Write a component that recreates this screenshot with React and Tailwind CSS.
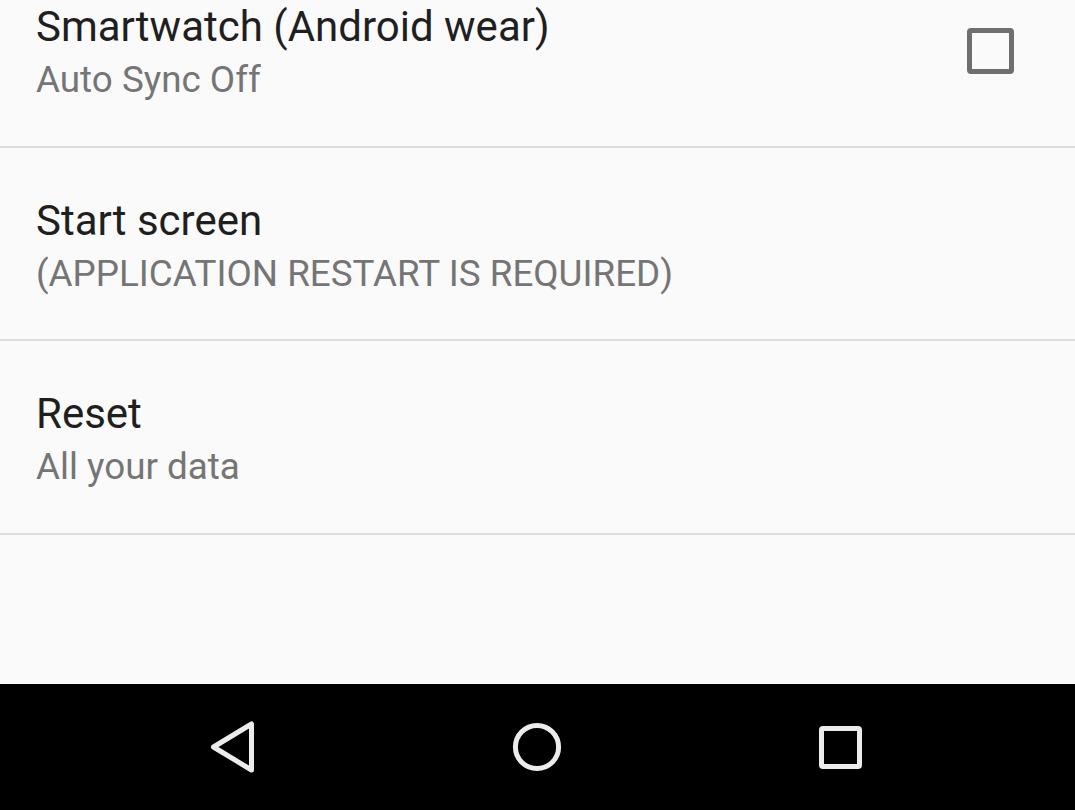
import { useState } from 'react'

const rows = [
  { title: 'Smartwatch (Android wear)', sub: 'Auto Sync Off', check: true },
  { title: 'Start screen', sub: '(APPLICATION RESTART IS REQUIRED)' },
  { title: 'Reset', sub: 'All your data' },
]

function Row({ title, sub, check, checked, onToggle }) {
  return (
    <div className="h-[193.5px] shrink-0 border-b-2 border-[#dddddd] flex items-start justify-between">
      <div className="pl-[36px] pt-[48px]">
        <div className="text-[42px] leading-[50px] text-[#1f1f1f]">{title}</div>
        <div className="text-[36.8px] leading-[56px] text-[#757575]">{sub}</div>
      </div>
      {check && (
        <div className="h-full flex items-center pr-[61px] pt-[2px]">
          <button
            onClick={onToggle}
            className="w-[47px] h-[46px] border-[5px] border-[#6f6f6f] rounded-[4px] flex items-center justify-center"
          >
            {checked && (
              <svg width="34" height="34" viewBox="0 0 24 24" fill="none" stroke="#6f6f6f" strokeWidth="3">
                <path d="M4 12l5 5L20 6" />
              </svg>
            )}
          </button>
        </div>
      )}
    </div>
  )
}

export default function App() {
  const [checked, setChecked] = useState(false)

  return (
    <div className="w-[1075px] h-[810px] bg-[#fafafa] flex flex-col overflow-hidden font-['Roboto',sans-serif]">
      <div className="flex-1 overflow-hidden">
        <div className="-mt-[46px] flex flex-col">
          {rows.map(r => (
            <Row
              key={r.title}
              {...r}
              checked={checked}
              onToggle={() => setChecked(c => !c)}
            />
          ))}
        </div>
      </div>

      {/* nav bar */}
      <div className="h-[126px] shrink-0 bg-black flex items-center justify-center">
        <div className="w-[304px] flex justify-center -ml-[2px]">
          <svg width="46" height="52" viewBox="0 0 46 52" fill="none" stroke="#ececec" strokeWidth="5" strokeLinejoin="round">
            <path d="M41.5 3 L41.5 49 L3.5 26 Z" />
          </svg>
        </div>
        <div className="w-[304px] flex justify-center">
          <svg width="50" height="50" viewBox="0 0 50 50" fill="none" stroke="#ececec" strokeWidth="5">
            <circle cx="25" cy="25" r="21.6" />
          </svg>
        </div>
        <div className="w-[304px] flex justify-center">
          <svg width="45" height="45" viewBox="0 0 45 45" fill="none" stroke="#ececec" strokeWidth="5" strokeLinejoin="round">
            <rect x="3.5" y="3.5" width="38" height="38" rx="1.5" />
          </svg>
        </div>
      </div>
    </div>
  )
}
